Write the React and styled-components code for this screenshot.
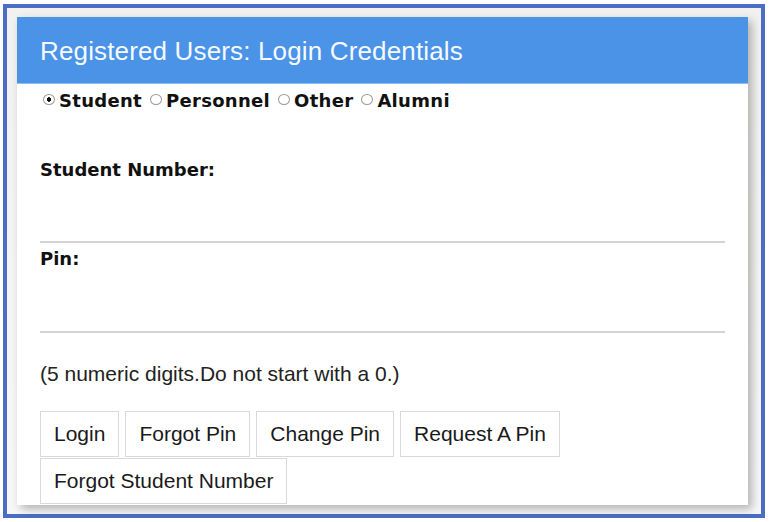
import styled, { createGlobalStyle } from 'styled-components';

const GlobalStyle = createGlobalStyle`
  html, body {
    margin: 0;
    padding: 0;
    background: #ffffff;
  }
  * { box-sizing: border-box; }
`;

const Frame = styled.div`
  width: 762px;
  height: 514px;
  margin: 4px 0 0 3px;
  border: 4px solid #4a6ec4;
  background: linear-gradient(#f1f1ef, #f7f7f7);
  padding: 9px 13px 9px 10px;
`;

const Card = styled.div`
  width: 731px;
  height: 488px;
  background: #ffffff;
  box-shadow: 4px 4px 9px rgba(0, 0, 0, 0.28);
  overflow: hidden;
`;

const Header = styled.div`
  height: 67px;
  background: #4a93e7;
  color: #f6f9ff;
  font-family: 'Liberation Sans', Arial, sans-serif;
  font-size: 26px;
  letter-spacing: 0.15px;
  display: flex;
  align-items: center;
  padding: 2px 23px 0;
  border-bottom: 1px solid #8cc0f2;
`;

const Body = styled.div`
  padding: 5px 23px 0;
  display: flex;
  flex-direction: column;
`;

const RadioRow = styled.div`
  display: flex;
  align-items: flex-start;
  height: 24px;
  font-family: 'DejaVu Sans', Verdana, sans-serif;
  font-weight: bold;
  font-size: 18px;
  letter-spacing: 0.3px;
  line-height: 24px;
  color: #111;
  padding-left: 3px;
`;

const RadioOption = styled.label`
  display: inline-flex;
  align-items: flex-start;
  margin-right: 8px;
`;

const RadioDot = styled.span`
  display: inline-block;
  width: 12px;
  height: 11px;
  margin-top: 5px;
  margin-right: 4px;
  border-radius: 50%;
  border: 1px solid #9a9a9a;
  background: ${(p) =>
    p.checked
      ? 'radial-gradient(circle, #111 0 2px, #fff 2.5px)'
      : '#fff'};
`;

const Label = styled.div`
  font-family: 'DejaVu Sans', Verdana, sans-serif;
  font-weight: bold;
  font-size: 18px;
  line-height: 24px;
  color: #111;
  margin-top: ${(p) => p.top}px;
`;

const Input = styled.input`
  display: block;
  width: 100%;
  height: ${(p) => p.h}px;
  border: none;
  border-bottom: 2px solid #d4d4d4;
  outline: none;
  background: transparent;
  font-family: 'Liberation Sans', Arial, sans-serif;
  font-size: 20px;
`;

const Hint = styled.div`
  margin-top: 29px;
  font-family: 'Liberation Sans', Arial, sans-serif;
  font-size: 21px;
  line-height: 24px;
  color: #222;
`;

const Buttons = styled.div`
  margin-top: 25px;
  display: flex;
  flex-wrap: wrap;
  column-gap: 6px;
  row-gap: 1px;
  width: 540px;
`;

const Button = styled.button`
  height: 46px;
  padding: 0 13px;
  background: #ffffff;
  border: 1px solid #d9d9d9;
  font-family: 'Liberation Sans', Arial, sans-serif;
  font-size: 21px;
  color: #1a1a1a;
  cursor: pointer;
`;

const options = [
  { name: 'Student', checked: true },
  { name: 'Personnel' },
  { name: 'Other' },
  { name: 'Alumni' },
];

const actions = ['Login', 'Forgot Pin', 'Change Pin', 'Request A Pin', 'Forgot Student Number'];

export default function App() {
  return (
    <>
      <GlobalStyle />
      <Frame>
        <Card>
          <Header>Registered Users: Login Credentials</Header>
          <Body>
            <RadioRow>
              {options.map((o) => (
                <RadioOption key={o.name}>
                  <RadioDot checked={o.checked} />
                  {o.name}
                </RadioOption>
              ))}
            </RadioRow>
            <Label top={45}>Student Number:</Label>
            <Input type="text" h={61} />
            <Label top={4}>Pin:</Label>
            <Input type="password" h={62} />
            <Hint>(5 numeric digits.Do not start with a 0.)</Hint>
            <Buttons>
              {actions.map((a) => (
                <Button key={a}>{a}</Button>
              ))}
            </Buttons>
          </Body>
        </Card>
      </Frame>
    </>
  );
}
